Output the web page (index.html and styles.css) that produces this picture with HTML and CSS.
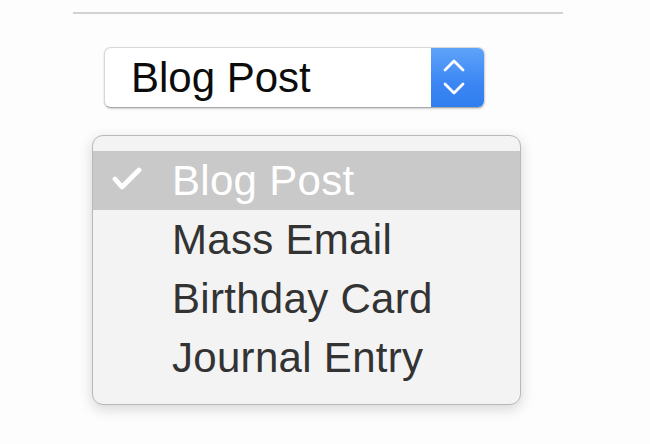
FILE: index.html
```html
<!DOCTYPE html>
<html>
<head>
<meta charset="utf-8">
<link rel="stylesheet" href="styles.css">
</head>
<body>
<div class="page">
  <div class="rule"></div>
  <div class="select">
    <span class="select-label">Blog Post</span>
    <span class="select-btn">
      <svg width="53" height="59" viewBox="0 0 53 59">
        <path d="M14 22 L23 13 L32 22" fill="none" stroke="#fff" stroke-width="2.8" stroke-linecap="round" stroke-linejoin="round"/>
        <path d="M14 36 L23 45 L32 36" fill="none" stroke="#fff" stroke-width="2.8" stroke-linecap="round" stroke-linejoin="round"/>
      </svg>
    </span>
  </div>
  <ul class="menu">
    <li class="item selected">
      <span class="check">
        <svg width="30" height="24" viewBox="0 0 30 24">
          <path d="M3 12 L10 20 L27 3" fill="none" stroke="#fff" stroke-width="4.8" stroke-linecap="round" stroke-linejoin="round"/>
        </svg>
      </span>
      Blog Post
    </li>
    <li class="item">Mass Email</li>
    <li class="item">Birthday Card</li>
    <li class="item">Journal Entry</li>
  </ul>
</div>
</body>
</html>
```

FILE: styles.css
```css
html, body {
  margin: 0;
  padding: 0;
  background: #fdfdfd;
}
.page {
  width: 650px;
  height: 444px;
  font-family: "Liberation Sans", Arial, sans-serif;
  padding-top: 12px;
  box-sizing: border-box;
}
.rule {
  margin-left: 73px;
  width: 490px;
  height: 2px;
  background: #d2d2d2;
}
.select {
  margin-top: 33px;
  margin-left: 104px;
  width: 381px;
  height: 61px;
  box-sizing: border-box;
  display: flex;
  align-items: stretch;
  background: #fff;
  border: 1px solid #d6d6d6;
  border-bottom-color: #a8a8a8;
  border-radius: 7px;
  box-shadow: 0 1px 2px rgba(0,0,0,0.18);
  overflow: hidden;
}
.select-label {
  flex: 1;
  display: flex;
  align-items: center;
  padding-left: 26px;
  font-size: 42px;
  color: #0c0c0c;
}
.select-btn {
  width: 53px;
  display: flex;
  align-items: center;
  justify-content: center;
  background: linear-gradient(#5ea3fa, #3b86f3 60%, #2f7ef0);
}
.menu {
  list-style: none;
  margin: 27px 0 0 92px;
  padding: 15px 0 17px;
  width: 429px;
  box-sizing: border-box;
  background: #f3f3f3;
  border: 1px solid #b8b8b8;
  border-radius: 11px;
  box-shadow: 0 4px 14px rgba(0,0,0,0.16);
}
.item {
  height: 59px;
  display: flex;
  align-items: center;
  padding-left: 79px;
  position: relative;
  font-size: 42px;
  color: #333;
  letter-spacing: 0.3px;
}
.item.selected {
  background: #c9c9c9;
  color: #fff;
}
.check {
  position: absolute;
  left: 19px;
  top: 16px;
  display: flex;
}
```
